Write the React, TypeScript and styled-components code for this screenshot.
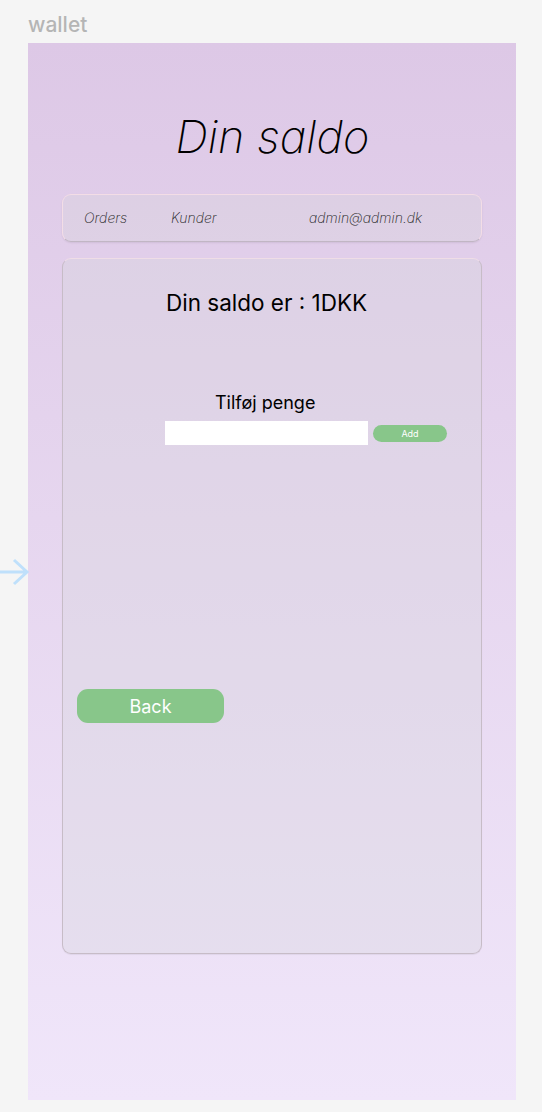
import React from "react";
import styled, { createGlobalStyle } from "styled-components";

const Global = createGlobalStyle`
  html, body { margin: 0; padding: 0; background: #f5f5f5; }
  body { font-family: Inter, "Noto Sans", sans-serif; }
  * { box-sizing: border-box; }
`;

const Page = styled.div`
  position: relative;
  width: 542px;
  min-height: 1112px;
  padding: 13px 26px 12px 28px;
  background: #f5f5f5;
`;

const FrameLabel = styled.div`
  font-size: 21px;
  font-weight: 500;
  color: #b5b5b5;
  line-height: 24px;
  height: 30px;
`;

const Frame = styled.main`
  width: 488px;
  height: 1057px;
  background: linear-gradient(180deg, #ddc8e6 0%, #e6d6ef 45%, #f0e6fa 100%);
  padding: 66px 34px 0 34px;
  display: flex;
  flex-direction: column;
`;

const Title = styled.h1`
  margin: 0;
  text-align: center;
  font-size: 45px;
  font-style: italic;
  font-weight: 200;
  line-height: 56px;
  color: #000;
  padding-left: 1px;
`;

const NavBar = styled.nav`
  margin-top: 29px;
  width: 420px;
  height: 48px;
  border-radius: 9px;
  background: rgba(214, 214, 220, 0.3);
  border: 1px solid rgba(245, 222, 230, 0.9);
  border-bottom-color: rgba(180, 170, 180, 0.7);
  box-shadow: 0 1px 2px rgba(0, 0, 0, 0.08);
  display: grid;
  grid-template-columns: 87px 138px auto;
  align-items: center;
  padding-left: 21px;
  padding-bottom: 2px;
`;

const NavItem = styled.span`
  font-size: 14px;
  font-style: italic;
  font-weight: 200;
  color: #222;
`;

const Card = styled.section`
  margin-top: 16px;
  width: 420px;
  height: 696px;
  border-radius: 9px;
  background: rgba(214, 214, 220, 0.35);
  border: 1px solid #c7bcc7;
  border-top-color: #efdde6;
  box-shadow: 0 1px 1px rgba(0, 0, 0, 0.06);
  display: flex;
  flex-direction: column;
  padding-top: 29px;
`;

const Balance = styled.div`
  margin-left: 103px;
  font-size: 22.5px;
  font-weight: 400;
  color: #000;
  line-height: 29px;
`;

const AddLabel = styled.div`
  margin-top: 75px;
  margin-left: 152px;
  font-size: 18px;
  font-weight: 400;
  color: #000;
  line-height: 22px;
`;

const AddRow = styled.div`
  margin-top: 7px;
  margin-left: 102px;
  display: flex;
  align-items: center;
  gap: 5px;
`;

const AmountInput = styled.input`
  width: 203px;
  height: 24px;
  border: none;
  background: #fff;
  outline: none;
  padding: 0 6px;
  font-family: inherit;
`;

const GreenButton = styled.button<{ $size: "small" | "large" }>`
  border: none;
  background: #88c68a;
  color: #fff;
  font-family: inherit;
  font-weight: 400;
  cursor: pointer;
  padding: 0;
  width: ${(p) => (p.$size === "small" ? "74px" : "147px")};
  height: ${(p) => (p.$size === "small" ? "17px" : "34px")};
  border-radius: ${(p) => (p.$size === "small" ? "9px" : "11px")};
  font-size: ${(p) => (p.$size === "small" ? "9px" : "18px")};
`;

const BackRow = styled.div`
  margin-top: 244px;
  margin-left: 14px;
`;

const Connector = styled.svg`
  position: absolute;
  left: 0;
  top: 558px;
`;

export default function App() {
  return (
    <>
      <Global />
      <Page>
        <FrameLabel>wallet</FrameLabel>
        <Frame>
          <Title>Din saldo</Title>
          <NavBar>
            <NavItem>Orders</NavItem>
            <NavItem>Kunder</NavItem>
            <NavItem>admin@admin.dk</NavItem>
          </NavBar>
          <Card>
            <Balance>Din saldo er : 1DKK</Balance>
            <AddLabel>Tilføj penge</AddLabel>
            <AddRow>
              <AmountInput type="text" />
              <GreenButton $size="small">Add</GreenButton>
            </AddRow>
            <BackRow>
              <GreenButton $size="large">Back</GreenButton>
            </BackRow>
          </Card>
        </Frame>
        <Connector width="30" height="28" viewBox="0 0 30 28">
          <path d="M0 14 H27 M14 2 L27 14 L14 26" stroke="#bfe0fb" strokeWidth="3" fill="none" />
        </Connector>
      </Page>
    </>
  );
}
